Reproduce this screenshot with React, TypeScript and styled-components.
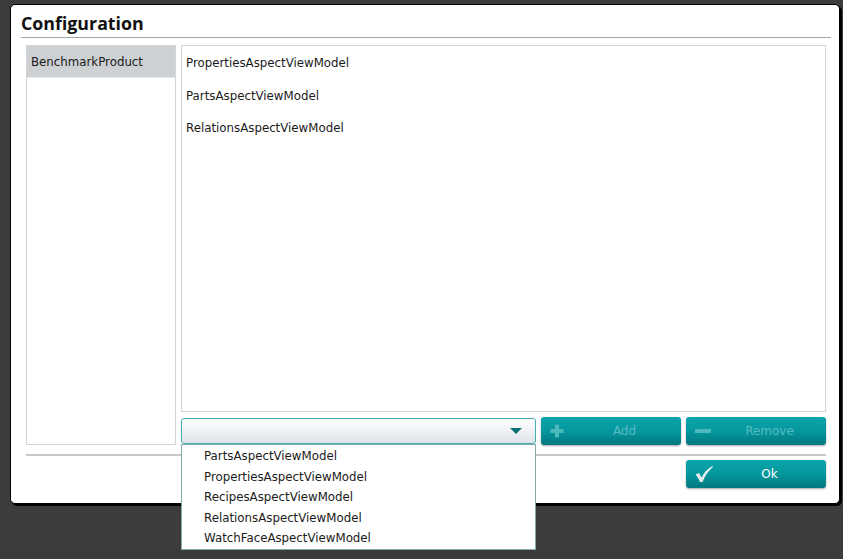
import React from "react";
import styled, { createGlobalStyle } from "styled-components";

const Global = createGlobalStyle`
  html, body { margin: 0; padding: 0; background: #3c3c3c; }
  body { font-family: "DejaVu Sans", Verdana, sans-serif; font-size: 11.8px; color: #1a1a1a; }
  * { box-sizing: border-box; }
`;

const Screen = styled.div`
  width: 843px;
  height: 559px;
  padding: 4px 0 0 10px;
  background: #3c3c3c;
  overflow: hidden;
`;

const Dialog = styled.div`
  width: 830px;
  height: 500px;
  background: #ffffff;
  border: 1px solid #000;
  border-radius: 5px;
  box-shadow: 2px 2px 0 #000;
  padding: 0 8px 0 10px;
  display: flex;
  flex-direction: column;
`;

const Header = styled.div`
  height: 33px;
  border-bottom: 1px solid #a4a4a4;
  display: flex;
  align-items: flex-end;
  padding-bottom: 4px;
`;

const Title = styled.h1`
  margin: 0;
  font-family: "Open Sans", "DejaVu Sans", sans-serif;
  font-weight: 700;
  font-size: 17.8px;
  line-height: 20px;
  color: #111;
`;

const Body = styled.div`
  padding: 7px 5px 0 5px;
  display: flex;
  flex-direction: column;
`;

const Main = styled.div`
  display: grid;
  grid-template-columns: 150px 645px;
  column-gap: 5px;
  height: 399px;
`;

const SideList = styled.div`
  border: 1px solid #d4d4d4;
  background: #fff;
`;

const SideItem = styled.div<{ $selected?: boolean }>`
  height: 32px;
  padding: 1px 4px 0;
  display: flex;
  align-items: center;
  background: ${(p) => (p.$selected ? "#cdd1d4" : "transparent")};
  border-bottom: ${(p) => (p.$selected ? "1px solid #e6e8ea" : "none")};
  color: #1a1a1a;
`;

const RightCol = styled.div`
  display: flex;
  flex-direction: column;
  gap: 5px;
`;

const ContentPanel = styled.div`
  height: 367px;
  border: 1px solid #d4d4d4;
  background: #fff;
`;

const ContentItem = styled.div`
  height: 32.5px;
  padding: 2px 4px 0;
  display: flex;
  align-items: center;
`;

const Controls = styled.div`
  display: grid;
  grid-template-columns: 355px 140px 140px;
  column-gap: 5px;
  align-items: center;
  height: 28px;
`;

const ComboWrap = styled.div`
  position: relative;
  height: 26px;
`;

const Combo = styled.div`
  height: 26px;
  border: 1px solid #46adb0;
  border-radius: 3px;
  background: linear-gradient(#ffffff, #dde3e8);
  display: flex;
  align-items: center;
  justify-content: flex-end;
  padding-right: 13px;
`;

const Arrow = styled.span`
  width: 0;
  height: 0;
  border-left: 6px solid transparent;
  border-right: 6px solid transparent;
  border-top: 6px solid #0b6e75;
`;

const Popup = styled.ul`
  position: absolute;
  left: 0;
  top: 26px;
  width: 355px;
  margin: 0;
  padding: 1px 0 0;
  list-style: none;
  background: #fff;
  border: 1px solid #86a9aa;
  z-index: 5;
`;

const PopupItem = styled.li`
  height: 20.5px;
  padding-left: 22px;
  display: flex;
  align-items: center;
`;

const TealButton = styled.button<{ $disabled?: boolean }>`
  position: relative;
  height: 28px;
  width: 140px;
  border: none;
  border-radius: 3px;
  padding: 0 0 0 27px;
  background: linear-gradient(#0ba4ab, #06979e 50%, #00787e);
  box-shadow: 0 1px 2px rgba(0, 0, 0, 0.35);
  color: ${(p) => (p.$disabled ? "#55bcc0" : "#ffffff")};
  font-family: "DejaVu Sans", Verdana, sans-serif;
  font-size: 12px;
  display: flex;
  align-items: center;
  justify-content: center;
  cursor: default;
`;

const ButtonIcon = styled.svg`
  position: absolute;
  left: 8px;
  top: 50%;
  transform: translateY(-50%);
`;

const Separator = styled.div`
  height: 2px;
  background: #c9c9c9;
  margin-top: 10px;
`;

const Footer = styled.div`
  display: flex;
  justify-content: flex-end;
  padding-top: 4px;
`;

const sideItems = ["BenchmarkProduct"];
const aspects = ["PropertiesAspectViewModel", "PartsAspectViewModel", "RelationsAspectViewModel"];
const options = [
  "PartsAspectViewModel",
  "PropertiesAspectViewModel",
  "RecipesAspectViewModel",
  "RelationsAspectViewModel",
  "WatchFaceAspectViewModel",
];

export default function App() {
  return (
    <>
      <Global />
      <Screen>
        <Dialog>
          <Header>
            <Title>Configuration</Title>
          </Header>
          <Body>
            <Main>
              <SideList>
                {sideItems.map((s) => (
                  <SideItem key={s} $selected>
                    {s}
                  </SideItem>
                ))}
              </SideList>
              <RightCol>
                <ContentPanel>
                  {aspects.map((a) => (
                    <ContentItem key={a}>{a}</ContentItem>
                  ))}
                </ContentPanel>
                <Controls>
                  <ComboWrap>
                    <Combo>
                      <Arrow />
                    </Combo>
                    <Popup>
                      {options.map((o) => (
                        <PopupItem key={o}>{o}</PopupItem>
                      ))}
                    </Popup>
                  </ComboWrap>
                  <TealButton $disabled>
                    <ButtonIcon width="16" height="16" viewBox="0 0 16 16">
                      <path d="M8 1.5v13M1.5 8h13" stroke="#4db9bd" strokeWidth="4" />
                    </ButtonIcon>
                    Add
                  </TealButton>
                  <TealButton $disabled>
                    <ButtonIcon width="18" height="16" viewBox="0 0 18 16">
                      <path d="M1 8h16" stroke="#4db9bd" strokeWidth="4" />
                    </ButtonIcon>
                    Remove
                  </TealButton>
                </Controls>
              </RightCol>
            </Main>
            <Separator />
            <Footer>
              <TealButton>
                <ButtonIcon width="20" height="18" viewBox="0 0 20 18">
                  <path
                    d="M1.5 9.5 L5 8 L7.5 12.5 C10 7.5 13.5 3.5 18.5 1 L19 2 C14.5 5.5 11 10.5 8.5 17 L6 17 C4.8 14 3.2 11.5 1.5 9.5 Z"
                    fill="#e6eeee"
                  />
                </ButtonIcon>
                Ok
              </TealButton>
            </Footer>
          </Body>
        </Dialog>
      </Screen>
    </>
  );
}
